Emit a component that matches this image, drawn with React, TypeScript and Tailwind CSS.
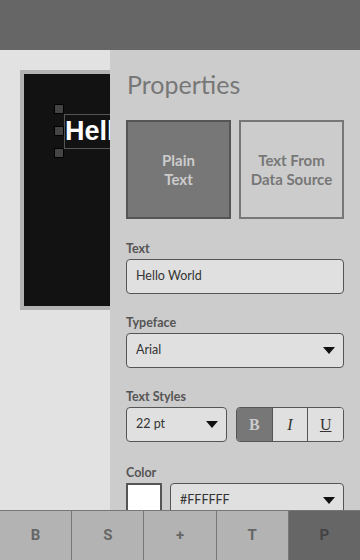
import { useState } from "react";

function Caret() {
  return (
    <svg width="12" height="7" viewBox="0 0 12 7" className="shrink-0">
      <path d="M0 0h12L6 7z" fill="#111" />
    </svg>
  );
}

function Label({ children }: { children: string }) {
  return <div className="text-[12.5px] font-bold text-[#555] leading-[13px] mb-[4px]">{children}</div>;
}

export default function App() {
  const [active] = useState("P");
  const tabs = ["B", "S", "+", "T", "P"];

  return (
    <div className="w-[360px] h-[560px] flex flex-col overflow-hidden bg-[#cccccc] font-['Lato','Open_Sans',sans-serif]">
      {/* top bar */}
      <div className="h-[50px] shrink-0 bg-[#666666]" />

      <div className="flex flex-1 min-h-0">
        {/* canvas area */}
        <div className="w-[110px] shrink-0 bg-[#e2e2e2] overflow-hidden pt-[20px] pl-[20px]">
          <div className="w-[200px] h-[240px] border-4 border-[#b3b3b3] bg-[#121212] pt-[30px] pl-[30px]">
            <div className="flex">
              <div className="flex flex-col gap-[12px]">
                <div className="w-[10px] h-[10px] bg-[#444] border border-black" />
                <div className="w-[10px] h-[10px] bg-[#444] border border-black" />
                <div className="w-[10px] h-[10px] bg-[#444] border border-black" />
              </div>
              <div className="mt-[10px] h-[35px] border border-[#555] flex items-center">
                <span className="text-white font-bold text-[27px] leading-none font-['Liberation_Sans',Arial,sans-serif] whitespace-nowrap">
                  Hello World
                </span>
              </div>
            </div>
          </div>
        </div>

        {/* properties panel */}
        <div className="flex-1 bg-[#cccccc] px-4 pt-[22px] overflow-hidden">
          <h1 className="text-[25px] leading-none text-[#777] font-normal ml-px">Properties</h1>

          <div className="mt-[23px] flex gap-[8px]">
            <div className="w-[105px] h-[99px] border-2 border-[#555] bg-[#777777] flex items-center justify-center text-center text-[15px] font-bold leading-[19px] text-[#cccccc]">
              Plain<br />Text
            </div>
            <div className="w-[105px] h-[99px] border-2 border-[#777] bg-[#cccccc] flex items-center justify-center text-center text-[15px] font-bold leading-[19px] text-[#777]">
              Text From<br />Data Source
            </div>
          </div>

          <div className="mt-[23px]">
            <Label>Text</Label>
            <div className="h-[35px] rounded-[4px] border border-[#555] bg-[#e0e0e0] flex items-center px-[9px] text-[12.5px] text-[#333]">
              Hello World
            </div>
          </div>

          <div className="mt-[22px]">
            <Label>Typeface</Label>
            <div className="h-[35px] rounded-[4px] border border-[#555] bg-[#e0e0e0] flex items-center justify-between pl-[9px] pr-[8px] text-[12.5px] text-[#333]">
              <span>Arial</span>
              <Caret />
            </div>
          </div>

          <div className="mt-[22px]">
            <Label>Text Styles</Label>
            <div className="flex gap-[9px]">
              <div className="w-[101px] h-[35px] rounded-[4px] border border-[#555] bg-[#e0e0e0] flex items-center justify-between pl-[9px] pr-[8px] text-[12.5px] text-[#333]">
                <span>22 pt</span>
                <Caret />
              </div>
              <div className="flex-1 h-[35px] rounded-[4px] border border-[#555] overflow-hidden flex font-['Liberation_Serif',serif] text-[16px]">
                <div className="flex-1 bg-[#777] flex items-center justify-center font-bold text-[#ccc]">B</div>
                <div className="flex-1 bg-[#e0e0e0] border-l border-[#555] flex items-center justify-center italic text-[#333]">I</div>
                <div className="flex-1 bg-[#e0e0e0] border-l border-[#555] flex items-center justify-center underline text-[#333]">U</div>
              </div>
            </div>
          </div>

          <div className="mt-[24px]">
            <Label>Color</Label>
            <div className="flex gap-[8px]">
              <div className="w-[36px] h-[36px] shrink-0 border-2 border-[#555] bg-white" />
              <div className="flex-1 h-[35px] rounded-[4px] border border-[#555] bg-[#e0e0e0] flex items-center justify-between pl-[9px] pr-[8px] text-[12.5px] text-[#333]">
                <span>#FFFFFF</span>
                <Caret />
              </div>
            </div>
          </div>
        </div>
      </div>

      {/* bottom nav */}
      <div className="h-[50px] shrink-0 flex border-t border-[#777] bg-[#b3b3b3] font-['Roboto',sans-serif]">
        {tabs.map((t, i) => (
          <div
            key={t}
            className={
              "flex-1 flex items-center justify-center text-[15px] font-bold " +
              (i > 0 ? "border-l border-[#777] " : "") +
              (t === active ? "bg-[#666666] text-[#444]" : "text-[#666]")
            }
          >
            {t}
          </div>
        ))}
      </div>
    </div>
  );
}
